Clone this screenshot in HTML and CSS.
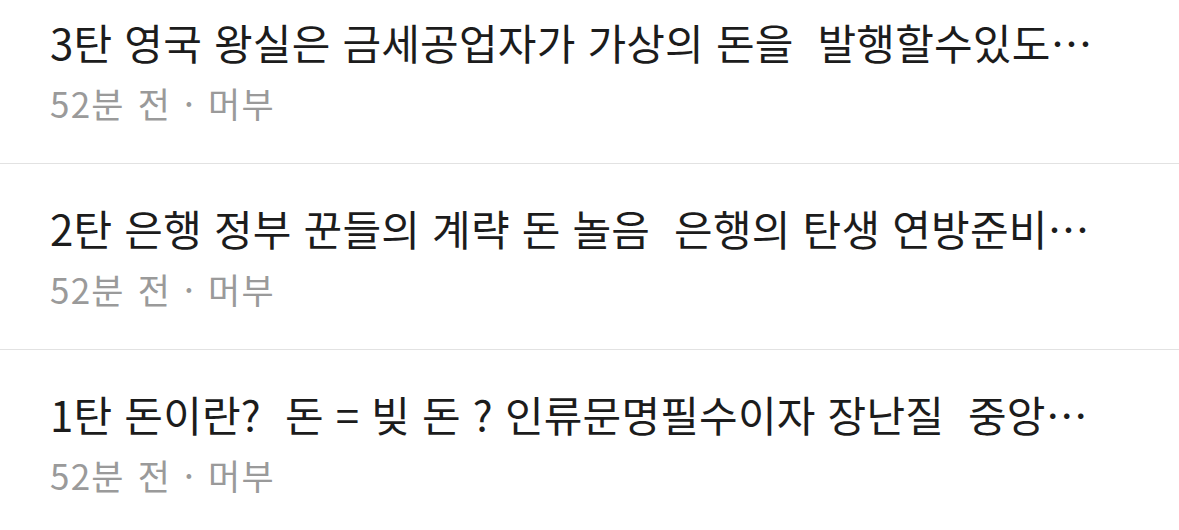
FILE: index.html
```html
<!DOCTYPE html>
<html lang="ko">
<head>
<meta charset="utf-8">
<link rel="stylesheet" href="styles.css">
</head>
<body>
<ul class="feed">
  <li class="item">
    <div class="title">3탄 영국 왕실은 금세공업자가 가상의 돈을&nbsp; 발행할수있도…</div>
    <div class="meta">52분 전 · 머부</div>
  </li>
  <li class="item">
    <div class="title">2탄 은행 정부 꾼들의 계략 돈 놀음&nbsp; 은행의 탄생 연방준비…</div>
    <div class="meta">52분 전 · 머부</div>
  </li>
  <li class="item">
    <div class="title">1탄 돈이란?&nbsp; 돈 = 빚 돈 ? 인류문명필수이자 장난질&nbsp; 중앙…</div>
    <div class="meta">52분 전 · 머부</div>
  </li>
</ul>
</body>
</html>
```

FILE: styles.css
```css
html, body {
  margin: 0;
  padding: 0;
  background: #ffffff;
}
body {
  font-family: "Noto Sans CJK KR", "Noto Sans", sans-serif;
  overflow: hidden;
}
.feed {
  list-style: none;
  margin: -22px 0 0 0;
  padding: 0;
}
.item {
  box-sizing: border-box;
  height: 186px;
  padding: 38px 40px 0 50px;
  border-bottom: 1px solid #e2e2e2;
}
.title {
  font-size: 42px;
  line-height: 52px;
  letter-spacing: 0.2px;
  color: #1c1c1c;
  white-space: nowrap;
}
.meta {
  margin-top: 13px;
  font-size: 35px;
  line-height: 44px;
  letter-spacing: 1.2px;
  word-spacing: 2px;
  color: #9a9a9a;
  white-space: nowrap;
}
```
